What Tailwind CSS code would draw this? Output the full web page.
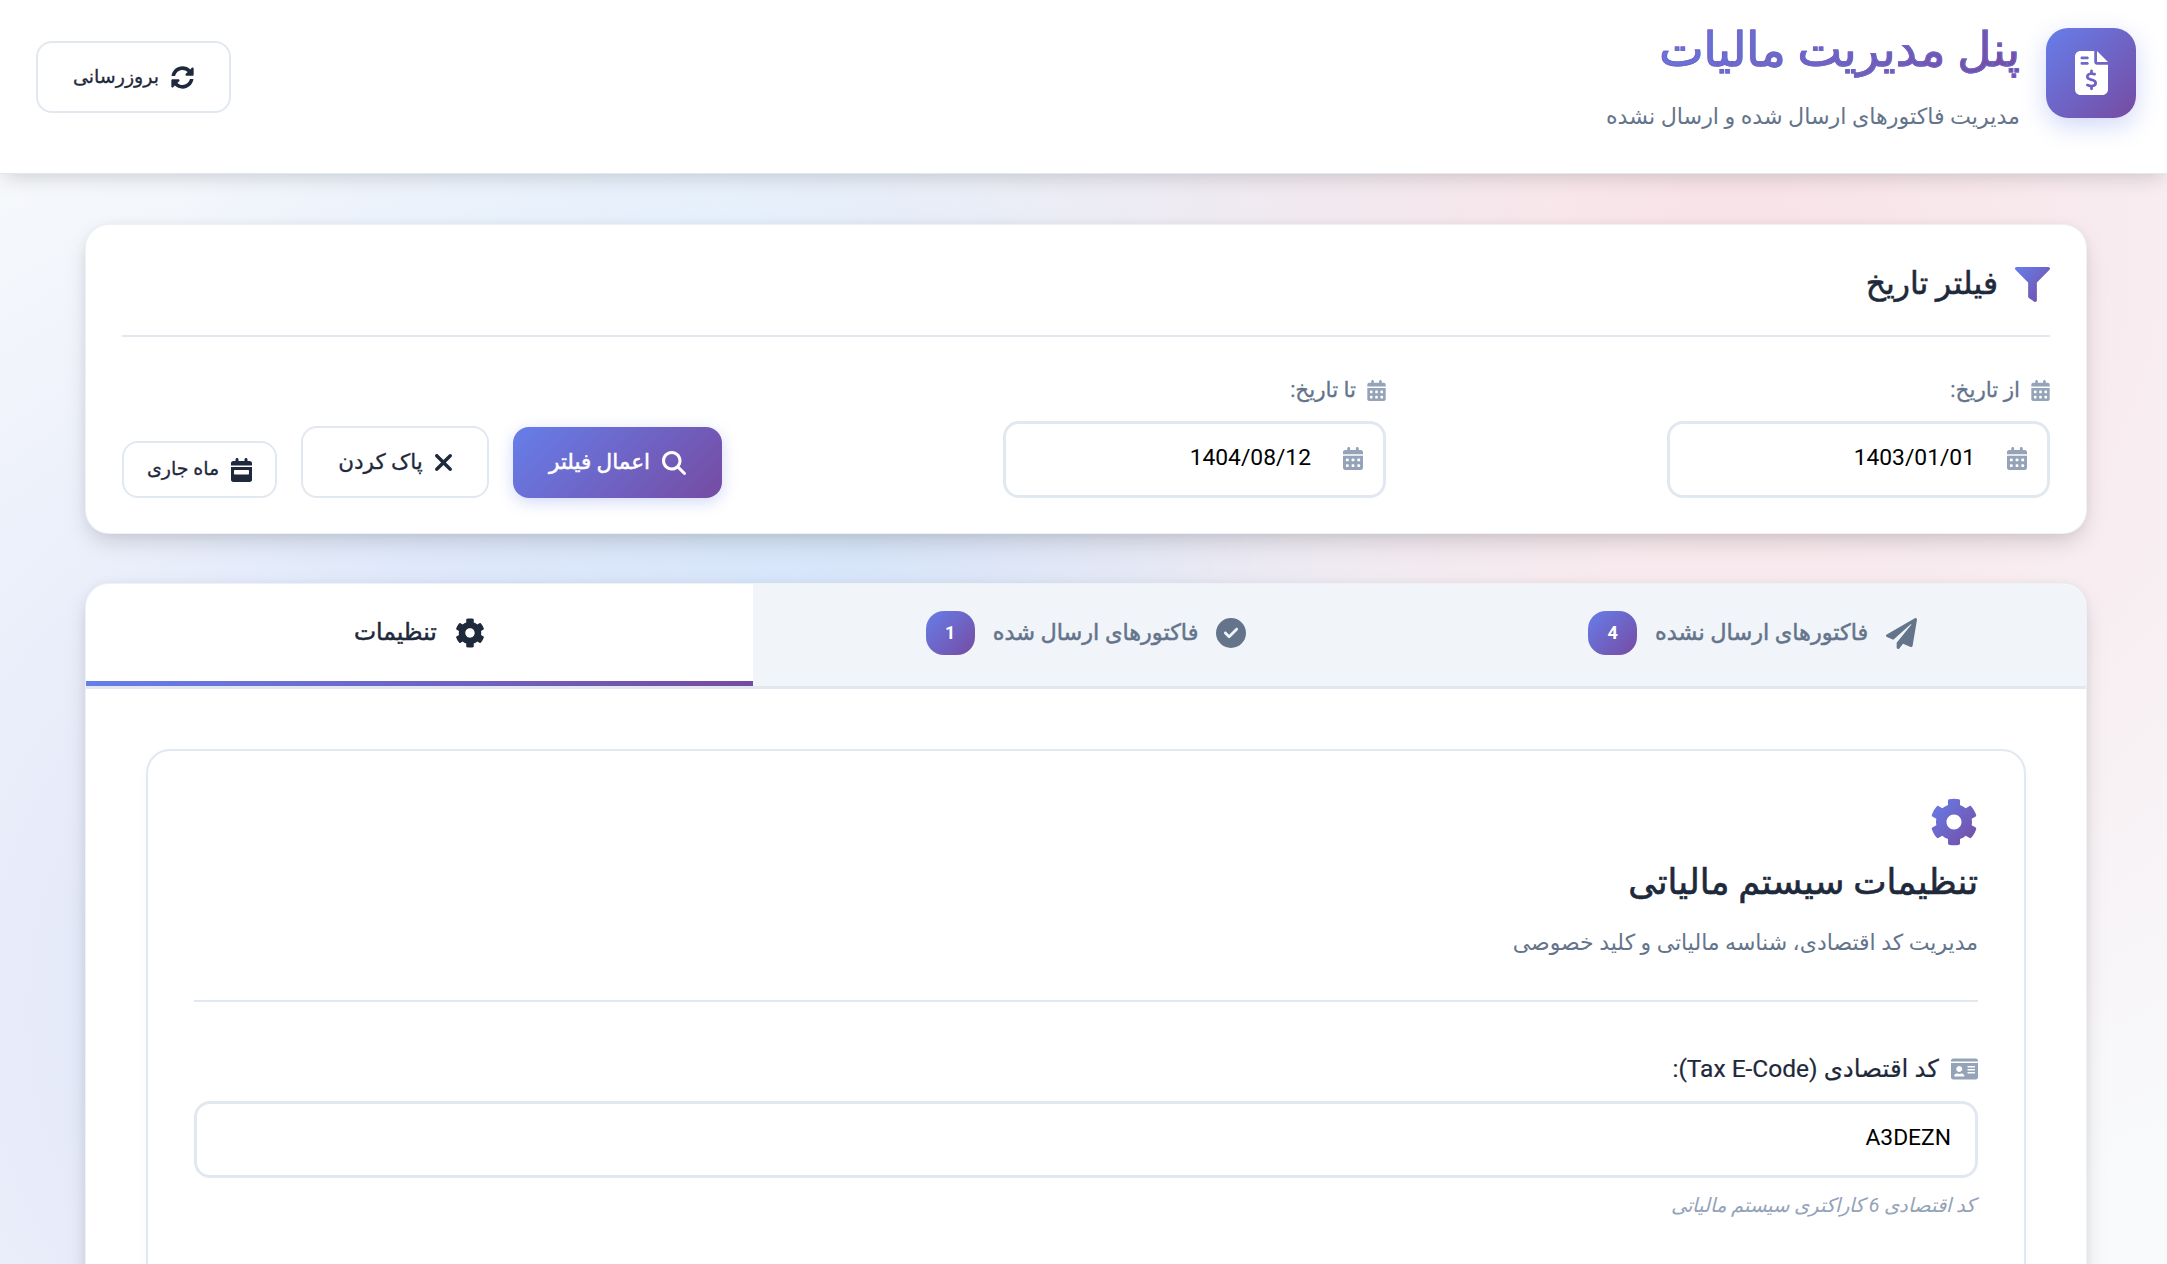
<!DOCTYPE html>
<html lang="fa" dir="rtl">
<head>
  <meta charset="UTF-8" />
  <title>پنل مدیریت مالیات</title>
  <script src="https://cdn.jsdelivr.net/npm/@tailwindcss/browser@4"></script>
</head>
<body class="h-screen overflow-hidden bg-[#f8fafc] bg-[radial-gradient(circle_at_20%_80%,rgba(102,126,234,0.2),transparent_50%),radial-gradient(circle_at_80%_20%,rgba(245,87,108,0.15),transparent_50%),radial-gradient(circle_at_40%_40%,rgba(79,172,254,0.15),transparent_50%)] font-[Roboto,'Noto_Sans','DejaVu_Sans',sans-serif] text-[#1e293b]">

  <svg class="absolute w-0 h-0">
    <defs>
      <linearGradient id="brand" x1="0" y1="0" x2="1" y2="1">
        <stop offset="0" stop-color="#667eea" />
        <stop offset="1" stop-color="#764ba2" />
      </linearGradient>
      <path id="cal" d="M128 0c17.7 0 32 14.3 32 32V64H288V32c0-17.7 14.3-32 32-32s32 14.3 32 32V64h48c26.5 0 48 21.5 48 48v48H0V112C0 85.5 21.5 64 48 64H96V32c0-17.7 14.3-32 32-32zM0 192H448V464c0 26.5-21.5 48-48 48H48c-26.5 0-48-21.5-48-48V192zm64 80v32c0 8.8 7.2 16 16 16h32c8.8 0 16-7.2 16-16V272c0-8.8-7.2-16-16-16H80c-8.8 0-16 7.2-16 16zm128 0v32c0 8.8 7.2 16 16 16h32c8.8 0 16-7.2 16-16V272c0-8.8-7.2-16-16-16H208c-8.8 0-16 7.2-16 16zm144-16c-8.8 0-16 7.2-16 16v32c0 8.8 7.2 16 16 16h32c8.8 0 16-7.2 16-16V272c0-8.8-7.2-16-16-16H336zM64 400v32c0 8.8 7.2 16 16 16h32c8.8 0 16-7.2 16-16V400c0-8.8-7.2-16-16-16H80c-8.8 0-16 7.2-16 16zm144-16c-8.8 0-16 7.2-16 16v32c0 8.8 7.2 16 16 16h32c8.8 0 16-7.2 16-16V400c0-8.8-7.2-16-16-16H208zm112 16v32c0 8.8 7.2 16 16 16h32c8.8 0 16-7.2 16-16V400c0-8.8-7.2-16-16-16H336c-8.8 0-16 7.2-16 16z" />
      <path id="cog" d="M487.4 315.7l-42.6-24.6c4.3-23.2 4.3-47 0-70.2l42.6-24.6c4.9-2.8 7.1-8.6 5.5-14-11.1-35.6-30-67.8-54.7-94.6-3.8-4.1-10-5.1-14.8-2.3L380.8 110c-17.9-15.4-38.5-27.3-60.8-35.1V25.8c0-5.6-3.9-10.5-9.4-11.7-36.7-8.2-74.3-7.8-109.2 0-5.5 1.2-9.4 6.1-9.4 11.7V75c-22.2 7.9-42.8 19.8-60.8 35.1L88.7 85.5c-4.9-2.8-11-1.9-14.8 2.3-24.7 26.7-43.6 58.9-54.7 94.6-1.7 5.4.6 11.2 5.5 14L67.3 221c-4.3 23.2-4.3 47 0 70.2l-42.6 24.6c-4.9 2.8-7.1 8.6-5.5 14 11.1 35.6 30 67.8 54.7 94.6 3.8 4.1 10 5.1 14.8 2.3l42.6-24.6c17.9 15.4 38.5 27.3 60.8 35.1v49.2c0 5.6 3.9 10.5 9.4 11.7 36.7 8.2 74.3 7.8 109.2 0 5.5-1.2 9.4-6.1 9.4-11.7v-49.2c22.2-7.9 42.8-19.8 60.8-35.1l42.6 24.6c4.9 2.8 11 1.9 14.8-2.3 24.7-26.7 43.6-58.9 54.7-94.6 1.5-5.5-.7-11.3-5.6-14.1zM256 336c-44.1 0-80-35.9-80-80s35.9-80 80-80 80 35.9 80 80-35.9 80-80 80z" />
    </defs>
  </svg>

  <!-- Header -->
  <header class="h-[174px] bg-white border-b border-[#e2e8f0] shadow-[0_6px_20px_-4px_rgba(0,0,0,0.18)] pt-7 pr-[31px] pl-9 flex items-start justify-between">
    <div class="flex items-start gap-[26px]">
      <div class="w-[90px] h-[90px] rounded-[22px] bg-[linear-gradient(135deg,#667eea,#764ba2)] shadow-[0_8px_24px_rgba(102,126,234,0.3)] flex items-center justify-center">
        <svg class="w-[33px] h-11 fill-white" viewBox="0 0 384 512"><path d="M64 0C28.7 0 0 28.7 0 64V448c0 35.3 28.7 64 64 64H320c35.3 0 64-28.7 64-64V160H256c-17.7 0-32-14.3-32-32V0H64zM256 0V128H384L256 0zM64 80c0-8.8 7.2-16 16-16h64c8.8 0 16 7.2 16 16s-7.2 16-16 16H80c-8.8 0-16-7.2-16-16zm0 64c0-8.8 7.2-16 16-16h64c8.8 0 16 7.2 16 16s-7.2 16-16 16H80c-8.8 0-16-7.2-16-16zm128 72c8.8 0 16 7.2 16 16v17.3c8.5 1.2 16.7 3.1 24.1 5.1c8.5 2.3 13.6 11 11.3 19.6s-11 13.6-19.6 11.3c-11.1-3-22-5.2-32.1-5.3c-8.4-.1-17.4 1.8-23.6 5.5c-5.7 3.4-8.1 7.3-8.1 12.8c0 3.7 1.3 6.5 7.3 10.1c6.9 4.1 16.6 7.1 29.2 10.9l.5 .1 0 0 0 0c11.3 3.4 25.3 7.6 36.3 14.6c12.1 7.6 22.4 19.7 22.7 38.2c.3 19.3-9.6 33.3-22.9 41.6c-7.7 4.8-16.4 7.6-25.1 9.1V440c0 8.8-7.2 16-16 16s-16-7.2-16-16V422.2c-11.2-2.1-21.7-5.7-30.9-8.9l0 0c-2.1-.7-4.2-1.4-6.2-2.1c-8.4-2.8-12.9-11.9-10.1-20.2s11.9-12.9 20.2-10.1c2.5 .8 4.8 1.6 7.1 2.4l0 0 0 0 0 0c13.6 4.6 24.6 8.4 36.3 8.7c9.1 .3 17.9-1.7 23.7-5.3c5.1-3.2 7.9-7.3 7.8-14c-.1-4.6-1.8-7.8-7.7-11.6c-6.8-4.3-16.5-7.4-29-11.2l-1.6-.5 0 0c-11-3.3-24.3-7.3-34.8-13.7c-12-7.2-22.6-18.9-22.7-37.3c-.1-19.4 10.8-32.8 23.8-40.5c7.5-4.4 15.8-7.2 24.1-8.7V232c0-8.8 7.2-16 16-16z" /></svg>
      </div>
      <div class="-mt-[6px] flex flex-col gap-[24px]">
        <h1 class="text-[47px] leading-[56px] font-normal text-transparent bg-clip-text bg-[linear-gradient(135deg,#667eea,#764ba2)] [-webkit-text-stroke:1px_#6f65c6]">پنل مدیریت مالیات</h1>
        <p class="text-[22.2px] leading-7 text-[#64748b]">مدیریت فاکتورهای ارسال شده و ارسال نشده</p>
      </div>
    </div>
    <button class="mt-[13px] w-[195px] h-[72px] rounded-2xl border-2 border-[#e2e8f0] bg-white flex items-center justify-center gap-3 text-[19px] [-webkit-text-stroke:0.3px]">
      <svg class="w-[23px] h-[23px] fill-[#1e293b]" viewBox="0 0 512 512"><path d="M370.72 133.28C339.458 104.008 298.888 87.962 255.848 88c-77.458.068-144.328 53.178-162.791 126.85-1.344 5.363-6.122 9.15-11.651 9.15H24.103c-7.498 0-13.194-6.807-11.807-14.176C33.933 94.924 134.813 8 256 8c66.448 0 126.791 26.136 171.315 68.685L463.03 40.97C478.149 25.851 504 36.559 504 57.941V192c0 13.255-10.745 24-24 24H345.941c-21.382 0-32.09-25.851-16.971-40.971l41.75-41.749zM32 296h134.059c21.382 0 32.09 25.851 16.971 40.971l-41.75 41.75c31.262 29.273 71.835 45.319 114.876 45.28 77.418-.07 144.315-53.144 162.787-126.849 1.344-5.363 6.122-9.15 11.651-9.15h57.304c7.498 0 13.194 6.807 11.807 14.176C478.067 417.076 377.187 504 256 504c-66.448 0-126.791-26.136-171.315-68.685L48.97 471.03C33.851 486.149 8 475.441 8 454.059V320c0-13.255 10.745-24 24-24z" /></svg>
      بروزرسانی
    </button>
  </header>

  <main class="pl-[85px] pr-[80px] pt-[50px] flex flex-col gap-[49px]">

    <!-- Date filter -->
    <section class="h-[310px] rounded-3xl bg-white border border-[#e2e8f0]/60 shadow-[0_10px_25px_-5px_rgba(0,0,0,0.18),0_0_10px_rgba(0,0,0,0.04)] px-9 pt-9">
      <div class="h-[76px] border-b-2 border-[#e2e8f0] flex items-start gap-[17px]">
        <svg class="w-[35px] h-[35px] mt-[6px]" fill="url(#brand)" viewBox="0 0 512 512"><path d="M487.976 0H24.028C2.71 0-8.047 25.866 7.058 40.971L192 225.941V432c0 7.831 3.821 15.17 10.237 19.662l80 55.98C298.02 518.69 320 507.493 320 487.98V225.941l184.947-184.97C520.021 25.896 509.338 0 487.976 0z" /></svg>
        <h2 class="mt-[3px] text-[31.5px] leading-10 font-normal [-webkit-text-stroke:0.6px]">فیلتر تاریخ</h2>
      </div>
      <div class="flex justify-between items-end pt-[39px]">
        <div class="w-[383px]">
          <label class="h-[30px] -mt-[1px] mb-[16px] flex items-center gap-[11px] text-[21.5px] text-[#64748b] [-webkit-text-stroke:0.3px]">
            <svg class="w-[19px] h-[21px] fill-[#94a3b8]" viewBox="0 0 448 512"><use href="#cal" /></svg>
            از تاریخ:
          </label>
          <div class="relative">
            <input dir="rtl" value="1403/01/01" class="w-full h-[77px] rounded-2xl border-[3px] border-[#e2e8f0] bg-white pr-[72px] pb-1 text-[22.8px] text-black font-[Roboto]" />
            <svg class="absolute top-[26px] right-[23px] w-5 h-[23px] fill-[#94a3b8]" viewBox="0 0 448 512"><use href="#cal" /></svg>
          </div>
        </div>
        <div class="w-[383px]">
          <label class="h-[30px] -mt-[1px] mb-[16px] flex items-center gap-[11px] text-[21.5px] text-[#64748b] [-webkit-text-stroke:0.3px]">
            <svg class="w-[19px] h-[21px] fill-[#94a3b8]" viewBox="0 0 448 512"><use href="#cal" /></svg>
            تا تاریخ:
          </label>
          <div class="relative">
            <input dir="rtl" value="1404/08/12" class="w-full h-[77px] rounded-2xl border-[3px] border-[#e2e8f0] bg-white pr-[72px] pb-1 text-[22.8px] text-black font-[Roboto]" />
            <svg class="absolute top-[26px] right-[23px] w-5 h-[23px] fill-[#94a3b8]" viewBox="0 0 448 512"><use href="#cal" /></svg>
          </div>
        </div>
        <div class="flex items-end gap-6">
          <button class="w-[209px] h-[71px] rounded-2xl bg-[linear-gradient(135deg,#667eea,#764ba2)] shadow-[0_4px_15px_rgba(102,126,234,0.3)] text-white text-[21.5px] [-webkit-text-stroke:0.5px] flex items-center justify-center gap-3">
            <svg class="w-6 h-6 fill-white" viewBox="0 0 512 512"><path d="M416 208c0 45.9-14.9 88.3-40 122.7L502.6 457.4c12.5 12.5 12.5 32.8 0 45.3s-32.8 12.5-45.3 0L330.7 376c-34.4 25.2-76.8 40-122.7 40C93.1 416 0 322.9 0 208S93.1 0 208 0S416 93.1 416 208zM208 352a144 144 0 1 0 0-288 144 144 0 1 0 0 288z" /></svg>
            اعمال فیلتر
          </button>
          <button class="w-[188px] h-[72px] rounded-2xl border-2 border-[#e2e8f0] bg-white text-[21.5px] [-webkit-text-stroke:0.3px] flex items-center justify-center gap-3">
            <svg class="w-[17px] h-[27px] fill-[#1e293b]" viewBox="0 0 320 512"><path d="M310.6 150.6c12.5-12.5 12.5-32.8 0-45.3s-32.8-12.5-45.3 0L160 210.7 54.6 105.4c-12.5-12.5-32.8-12.5-45.3 0s-12.5 32.8 0 45.3L114.7 256 9.4 361.4c-12.5 12.5-12.5 32.8 0 45.3s32.8 12.5 45.3 0L160 301.3 265.4 406.6c12.5 12.5 32.8 12.5 45.3 0s12.5-32.8 0-45.3L205.3 256 310.6 150.6z" /></svg>
            پاک کردن
          </button>
          <button class="w-[155px] h-[57px] rounded-2xl border-2 border-[#e2e8f0] bg-white text-[19px] [-webkit-text-stroke:0.3px] flex items-center justify-center gap-3">
            <svg class="w-[21px] h-6 fill-[#1e293b]" viewBox="0 0 448 512"><path d="M128 0c17.7 0 32 14.3 32 32V64H288V32c0-17.7 14.3-32 32-32s32 14.3 32 32V64h48c26.5 0 48 21.5 48 48v48H0V112C0 85.5 21.5 64 48 64H96V32c0-17.7 14.3-32 32-32zM0 192H448V464c0 26.5-21.5 48-48 48H48c-26.5 0-48-21.5-48-48V192zm80 64c-8.8 0-16 7.2-16 16v64c0 8.8 7.2 16 16 16H368c8.8 0 16-7.2 16-16V272c0-8.8-7.2-16-16-16H80z" /></svg>
            ماه جاری
          </button>
        </div>
      </div>
    </section>

    <!-- Tabs -->
    <section class="rounded-t-3xl bg-white border border-[#e2e8f0]/60 shadow-[0_10px_25px_-5px_rgba(0,0,0,0.18),0_0_10px_rgba(0,0,0,0.04)] h-[900px]">
      <div class="h-[105px] rounded-t-3xl overflow-hidden grid grid-cols-3 bg-[#f1f5f9] border-b-[3px] border-[#e2e8f0]">
        <button class="pb-1 flex items-center justify-center gap-[18px] text-[22.4px] [-webkit-text-stroke:0.5px] text-[#64748b]">
          <svg class="w-[31px] h-[31px] fill-[#64748b]" viewBox="0 0 512 512"><path d="M476 3.2L12.5 270.6c-18.1 10.4-15.8 35.6 2.2 43.2L121 358.4l287.3-253.2c5.5-4.9 13.3 2.6 8.6 8.3L176 407v80.5c0 23.6 28.5 32.9 42.5 15.8L282 426l124.6 52.2c14.2 6 30.4-2.9 33-18.2l72-432C515 7.8 493.3-6.8 476 3.2z" /></svg>
          فاکتورهای ارسال نشده
          <span class="w-[49px] h-[44px] rounded-[18px] bg-[linear-gradient(135deg,#667eea,#764ba2)] text-white text-lg font-bold [-webkit-text-stroke:0] flex items-center justify-center">4</span>
        </button>
        <button class="pb-1 flex items-center justify-center gap-[18px] text-[22.4px] [-webkit-text-stroke:0.5px] text-[#64748b]">
          <svg class="w-[30px] h-[30px] fill-[#64748b]" viewBox="0 0 512 512"><path d="M256 512A256 256 0 1 0 256 0a256 256 0 1 0 0 512zM369 209L241 337c-9.4 9.4-24.6 9.4-33.9 0l-64-64c-9.4-9.4-9.4-24.6 0-33.9s24.6-9.4 33.9 0l47 47L335 175c9.4-9.4 24.6-9.4 33.9 0s9.4 24.6 0 33.9z" /></svg>
          فاکتورهای ارسال شده
          <span class="w-[49px] h-[44px] rounded-[18px] bg-[linear-gradient(135deg,#667eea,#764ba2)] text-white text-lg font-bold [-webkit-text-stroke:0] flex items-center justify-center">1</span>
        </button>
        <button class="relative pb-[7px] -mb-[3px] bg-white flex items-center justify-center gap-[18px] text-[23.5px] [-webkit-text-stroke:0.5px] text-[#1e293b]">
          <svg class="w-[30px] h-[30px] fill-[#1e293b]" viewBox="0 0 512 512"><use href="#cog" /></svg>
          تنظیمات
          <span class="absolute inset-x-0 bottom-[3px] h-[5px] bg-[linear-gradient(90deg,#667eea,#764ba2)]"></span>
        </button>
      </div>

      <div class="p-[60px]">
        <div class="rounded-3xl border-2 border-[#e2e8f0] shadow-[0_4px_12px_rgba(0,0,0,0.03)] px-[46px] pt-[47px] h-[800px]">
          <div class="h-[204px] border-b-2 border-[#e2e8f0]">
            <svg class="w-12 h-12" fill="url(#brand)" viewBox="0 0 512 512"><use href="#cog" /></svg>
            <h3 class="mt-[13px] text-[35.4px] leading-[46px] font-normal [-webkit-text-stroke:0.6px]">تنظیمات سیستم مالیاتی</h3>
            <p class="mt-[24px] text-[22px] leading-7 text-[#64748b]">مدیریت کد اقتصادی، شناسه مالیاتی و کلید خصوصی</p>
          </div>
          <label class="mt-[52px] mb-[17px] h-[30px] flex items-center gap-3 text-[24.5px] [-webkit-text-stroke:0.2px]">
            <svg class="w-[27px] h-[24px] fill-[#94a3b8]" viewBox="0 0 576 512"><path d="M528 32H48C21.5 32 0 53.5 0 80v16h576V80c0-26.5-21.5-48-48-48zM0 432c0 26.5 21.5 48 48 48h480c26.5 0 48-21.5 48-48V128H0v304zm352-232c0-4.4 3.6-8 8-8h144c4.4 0 8 3.6 8 8v16c0 4.4-3.6 8-8 8H360c-4.4 0-8-3.6-8-8v-16zm0 64c0-4.4 3.6-8 8-8h144c4.4 0 8 3.6 8 8v16c0 4.4-3.6 8-8 8H360c-4.4 0-8-3.6-8-8v-16zm0 64c0-4.4 3.6-8 8-8h144c4.4 0 8 3.6 8 8v16c0 4.4-3.6 8-8 8H360c-4.4 0-8-3.6-8-8v-16zM176 192c35.3 0 64 28.7 64 64s-28.7 64-64 64-64-28.7-64-64 28.7-64 64-64zM67.1 396.2C75.5 370.5 99.6 352 128 352h8.2c12.3 5.1 25.7 8 39.8 8s27.6-2.9 39.8-8h8.2c28.4 0 52.5 18.5 60.9 44.2 3.2 9.9-5.2 19.8-15.6 19.8H82.7c-10.4 0-18.8-10-15.6-19.8z" /></svg>
            کد اقتصادی (Tax E-Code):
          </label>
          <input dir="ltr" value="A3DEZN" class="w-full h-[77px] rounded-2xl border-[3px] border-[#e2e8f0] bg-white px-6 pb-1 text-right text-[22.8px] text-black font-[Roboto]" />
          <p class="mt-[13px] pr-[3px] text-[19.6px] italic text-[#94a3b8]">کد اقتصادی 6 کاراکتری سیستم مالیاتی</p>
        </div>
      </div>
    </section>
  </main>
</body>
</html>
